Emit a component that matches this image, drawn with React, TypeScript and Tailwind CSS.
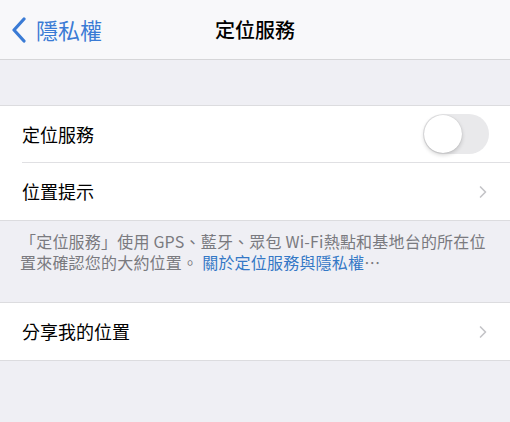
import { ChevronRight } from "lucide-react";

const font = { fontFamily: '"Noto Sans CJK TC", "Noto Sans", sans-serif' };

function Row({ label, right, border }: { label: string; right: React.ReactNode; border?: boolean }) {
  return (
    <div className="flex h-[57px] items-center pl-[22px]">
      <div
        className={`flex h-full flex-1 items-center justify-between pr-[21px] ${
          border ? "border-b border-[#e0e0e3]" : ""
        }`}
      >
        <span className="text-[18px] text-black">{label}</span>
        {right}
      </div>
    </div>
  );
}

function Chevron() {
  return <ChevronRight className="mr-[-4px] h-[20px] w-[20px] text-[#c4c4c7]" strokeWidth={2} />;
}

export default function App() {
  return (
    <div className="h-[422px] w-[510px] overflow-hidden bg-[#efeff4]" style={font}>
      {/* Nav bar */}
      <div className="relative flex h-[60px] items-center border-b border-[#d6d6d8] bg-[#f8f8fa]">
        <div className="flex items-center pl-[11px] text-[#3a7bd5]">
          <svg width="16" height="26" viewBox="0 0 16 26" fill="none">
            <path d="M13 2 L3 13 L13 24" stroke="currentColor" strokeWidth="3.2" strokeLinecap="round" strokeLinejoin="round" />
          </svg>
          <span className="ml-[9px] text-[22px]">隱私權</span>
        </div>
        <div className="absolute left-0 right-0 text-center text-[20px] font-medium text-black">定位服務</div>
      </div>

      <div className="h-[45px]" />

      {/* Group 1 */}
      <div className="border-y border-[#dcdcdf] bg-white">
        <Row
          label="定位服務"
          border
          right={
            <div className="flex h-[40px] w-[66px] items-center rounded-full bg-[#e9e9eb] p-[1px]">
              <div className="h-[38px] w-[38px] rounded-full bg-white shadow-[0_2px_4px_rgba(0,0,0,0.18),0_0_1px_rgba(0,0,0,0.2)]" />
            </div>
          }
        />
        <Row label="位置提示" right={<Chevron />} />
      </div>

      {/* Footer */}
      <div className="flex h-[81px] flex-col gap-[1px] whitespace-nowrap pl-[20px] pt-[10px] text-[16px] leading-[20px] tracking-[0.2px] text-[#7a7a7f]">
        <div>「定位服務」使用 GPS、藍牙、眾包 Wi-Fi熱點和基地台的所在位</div>
        <div>
          置來確認您的大約位置。
          <span className="ml-[4px] text-[#3478c6]">關於定位服務與隱私權</span>⋯
        </div>
      </div>

      {/* Group 2 */}
      <div className="border-y border-[#dcdcdf] bg-white">
        <Row label="分享我的位置" right={<Chevron />} />
      </div>
    </div>
  );
}
